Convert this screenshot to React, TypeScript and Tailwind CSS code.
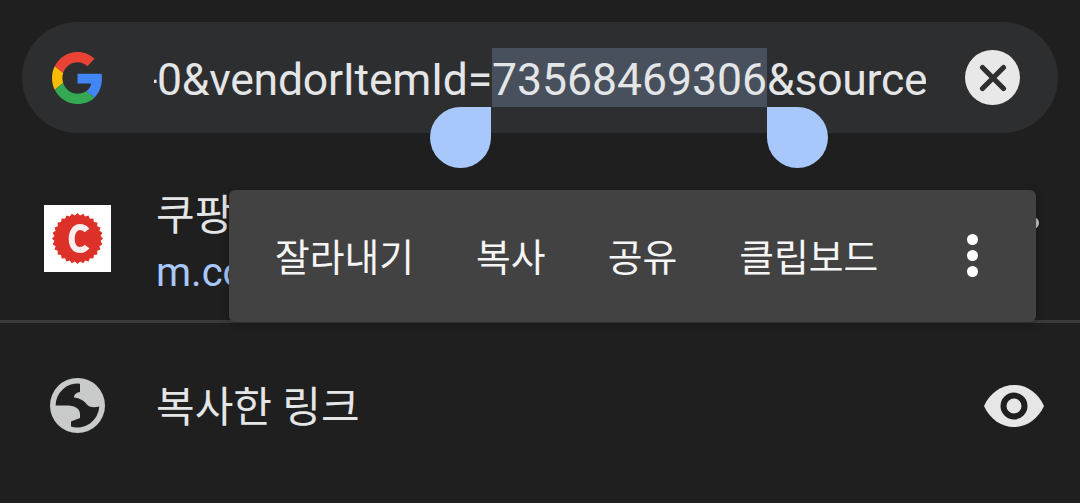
import React from 'react';

const fontStack = 'font-["Roboto","Noto_Sans_CJK_KR",sans-serif]';

const menuItems = ['잘라내기', '복사', '공유', '클립보드'];

const GoogleLogo = () => (
  <svg viewBox="0 0 48 48" className="w-[51px] h-[52px] shrink-0" preserveAspectRatio="none">
    <path fill="#EA4335" d="M24 9.5c3.54 0 6.71 1.22 9.21 3.6l6.85-6.85C35.9 2.38 30.47 0 24 0 14.62 0 6.51 5.38 2.56 13.22l7.98 6.19C12.43 13.72 17.74 9.5 24 9.5z" />
    <path fill="#4285F4" d="M46.98 24.55c0-1.57-.15-3.09-.38-4.55H24v9.02h12.94c-.58 2.96-2.26 5.48-4.78 7.18l7.73 6c4.51-4.18 7.09-10.36 7.09-17.65z" />
    <path fill="#FBBC05" d="M10.53 28.59c-.48-1.45-.76-2.99-.76-4.59s.27-3.14.76-4.59l-7.98-6.19C.92 16.46 0 20.12 0 24c0 3.88.92 7.54 2.56 10.78l7.97-6.19z" />
    <path fill="#34A853" d="M24 48c6.48 0 11.93-2.13 15.89-5.81l-7.73-6c-2.15 1.45-4.92 2.3-8.16 2.3-6.26 0-11.57-4.22-13.47-9.91l-7.98 6.19C6.51 42.62 14.62 48 24 48z" />
  </svg>
);

const CoupangIcon = () => {
  // 톱니 모양 배지
  const points = Array.from({ length: 56 }, (_, i) => {
    const r = i % 2 === 0 ? 25.5 : 23.2;
    const a = (i / 56) * Math.PI * 2;
    return `${33.5 + r * Math.cos(a)},${33.5 + r * Math.sin(a)}`;
  }).join(' ');
  return (
    <svg viewBox="0 0 67 67" className="w-[67px] h-[67px] shrink-0 bg-white">
      <polygon points={points} fill="#dc3029" />
      <path d="M43 25.5 C41 23 38.5 22 36 22 C31 22 27.7 27 27.7 33.7 C27.7 40.5 31 45 36 45 C38.5 45 41 44.2 43 41.5" fill="none" stroke="#f8eeee" strokeWidth="6" />
    </svg>
  );
};

const GlobeIcon = () => (
  <svg viewBox="0 0 55 55" className="w-[55px] h-[55px] shrink-0">
    <circle cx="27.5" cy="27.5" r="27.5" fill="#c9cbca" />
    <path d="M30 5.7 A22 22 0 0 0 5.6 27.5 L18 27.5 C25 27.5 30 31 30 36 L30 40 L21 43.5 L21 48.5 A22 22 0 0 0 49.3 28.5 C44 30 39 29.5 36 25.5 C33 21.5 28 20 24 19.5 C24 16 27 14.5 30 14 Z" fill="#1f1f1f" />
  </svg>
);

const EyeIcon = () => (
  <svg viewBox="0 0 60 42" className="w-[60px] h-[42px] shrink-0">
    <path d="M0 21 C6 8 17 0 30 0 C43 0 54 8 60 21 C54 34 43 42 30 42 C17 42 6 34 0 21 Z" fill="#e6e6e6" />
    <circle cx="30" cy="21" r="10.5" fill="#e6e6e6" stroke="#1f1f1f" strokeWidth="6" />
  </svg>
);

const App: React.FC = () => {
  return (
    <div className={`relative w-[1080px] h-[503px] overflow-hidden bg-[#1f1f1f] ${fontStack}`}>
      {/* 주소창 */}
      <div className="pt-[22px] px-[22px]">
        <div className="relative h-[111px] rounded-full bg-[#2d2e30] flex items-center pl-[30px] pr-[38px]">
          <GoogleLogo />
          <div className="ml-[51px] w-[772px] overflow-hidden whitespace-nowrap text-[44.5px] text-[#e4e5e6] -mt-[1px]">
            <div className="flex -ml-[9px]">
              <span className="pt-[6px] leading-[53px] tracking-[-0.25px]">-0&amp;vendorItemId=</span>
              <span className="pt-[6px] leading-[53px] bg-[#47505c]">73568469306</span>
              <span className="pt-[6px] leading-[53px] tracking-[-0.25px]">&amp;source</span>
            </div>
          </div>
          <div className="ml-auto w-[55px] h-[55px] rounded-full bg-[#e8e8e8] flex items-center justify-center shrink-0">
            <svg viewBox="0 0 24 24" className="w-[28px] h-[28px]">
              <path d="M3 3 L21 21 M21 3 L3 21" stroke="#2d2e30" strokeWidth="4.4" strokeLinecap="round" />
            </svg>
          </div>

          {/* 선택 핸들 */}
          <div className="absolute left-[408px] top-[85px] w-[61px] h-[61px] rounded-full rounded-tr-none bg-[#a8c7fa]" />
          <div className="absolute left-[745px] top-[85px] w-[61px] h-[61px] rounded-full rounded-tl-none bg-[#a8c7fa]" />
        </div>
      </div>

      {/* 제안 목록 */}
      <div className="flex items-center h-[190px] pt-[24px] pl-[44px] pr-[41px] border-b-[3px] border-[#3a3a3a]">
        <CoupangIcon />
        <div className="ml-[45px] mt-[10px] whitespace-nowrap">
          <div className="text-[42px] leading-[57px] text-[#e4e5e6]">쿠팡</div>
          <div className="text-[40px] leading-[57px] text-[#a8c7fa]">m.co</div>
        </div>
        <span className="ml-auto -mt-[31px] w-[12px] h-[12px] rounded-full bg-[#c9cbca]" />
      </div>
      <div className="flex items-center h-[165px] pl-[50px] pr-[36px]">
        <GlobeIcon />
        <div className="ml-[51px] pt-[4px] text-[42px] text-[#e4e5e6]">복사한 링크</div>
        <div className="ml-auto">
          <EyeIcon />
        </div>
      </div>

      {/* 텍스트 선택 메뉴 */}
      <div className="absolute left-[229px] top-[190px] w-[807px] h-[132px] rounded-md bg-[#424242] shadow-[0_2px_8px_rgba(0,0,0,0.3)] flex items-center pl-[46px] gap-[62px] text-[37.8px] text-[#f5f5f5]">
        {menuItems.map((item) => (
          <span key={item} className="pt-[4px]">
            {item}
          </span>
        ))}
        <div className="flex flex-col gap-[5px] ml-[27px] -mt-[1px]">
          <span className="w-[11px] h-[11px] rounded-full bg-white" />
          <span className="w-[11px] h-[11px] rounded-full bg-white" />
          <span className="w-[11px] h-[11px] rounded-full bg-white" />
        </div>
      </div>
    </div>
  );
};

export default App;
